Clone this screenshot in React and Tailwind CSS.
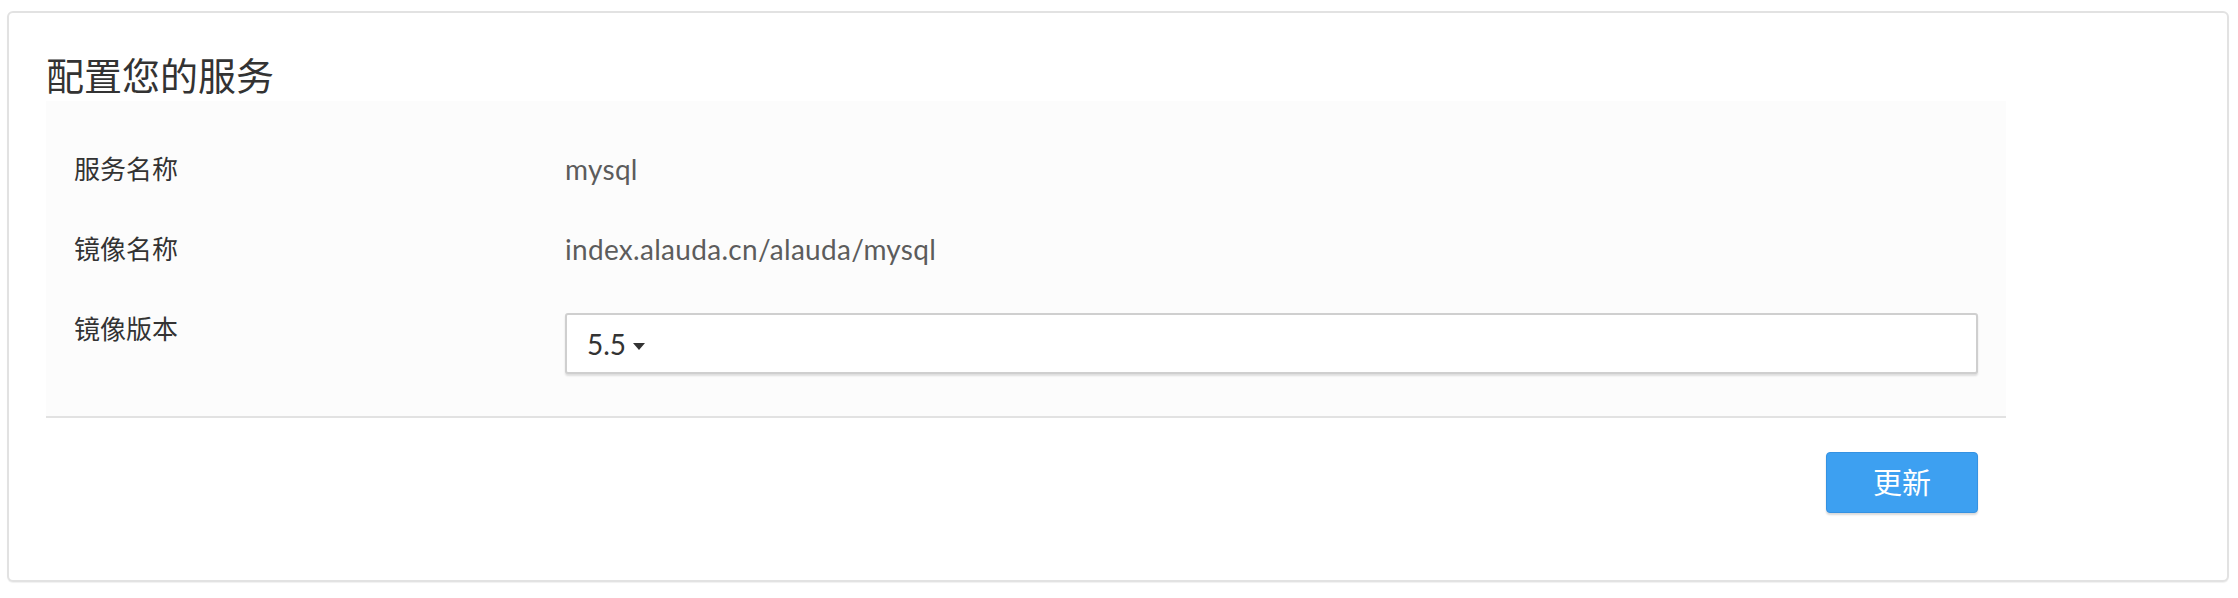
import React from "react";

const cjk = { fontFamily: 'Lato, "Noto Sans CJK SC", sans-serif' };

export default function App() {
  return (
    <div className="w-[2238px] h-[598px] bg-white pt-[11px] pl-[7px]" style={cjk}>
      <div className="w-[2222px] h-[571px] rounded-[6px] border-2 border-[#e2e2e2] bg-white shadow-[0_1px_1px_rgba(0,0,0,0.06)] pl-[37px]">
        <h1 className="h-[88px] pt-[36px] text-[38px] leading-[52px] text-[#333] font-normal">
          配置您的服务
        </h1>
        <div className="w-[1960px] bg-[#fcfcfc] border-b-2 border-[#e2e2e2] pt-[28px] pb-[42px] px-[28px]">
          <div className="flex h-[80px] items-center">
            <div className="w-[491px] text-[26px] text-[#333]">服务名称</div>
            <div className="text-[28px] tracking-[0.3px] text-[#5c5c5c]">mysql</div>
          </div>
          <div className="flex h-[80px] items-center">
            <div className="w-[491px] text-[26px] text-[#333]">镜像名称</div>
            <div className="text-[28px] tracking-[0.3px] text-[#5c5c5c]">index.alauda.cn/alauda/mysql</div>
          </div>
          <div className="flex items-start">
            <div className="w-[491px] h-[80px] flex items-center text-[26px] text-[#333]">镜像版本</div>
            <div className="mt-[24px] flex-1 h-[61px] rounded-[3px] border-2 border-[#cfcfcf] bg-white shadow-[0_2px_2px_rgba(0,0,0,0.12)] flex items-center pl-[20px]">
              <span className="text-[28px] text-[#333]">5.5</span>
              <svg width="12" height="7" viewBox="0 0 12 7" className="ml-[7px] mt-[5px]">
                <path d="M0 0 L12 0 L6 7 Z" fill="#333" />
              </svg>
            </div>
          </div>
        </div>
        <div className="w-[1960px] flex justify-end pr-[28px] pt-[34px]">
          <button className="w-[152px] h-[61px] rounded-[4px] bg-[#3da0f1] border border-[#3592e2] shadow-[0_2px_2px_rgba(0,0,0,0.15)] text-white text-[29px] leading-none">
            更新
          </button>
        </div>
      </div>
    </div>
  );
}
